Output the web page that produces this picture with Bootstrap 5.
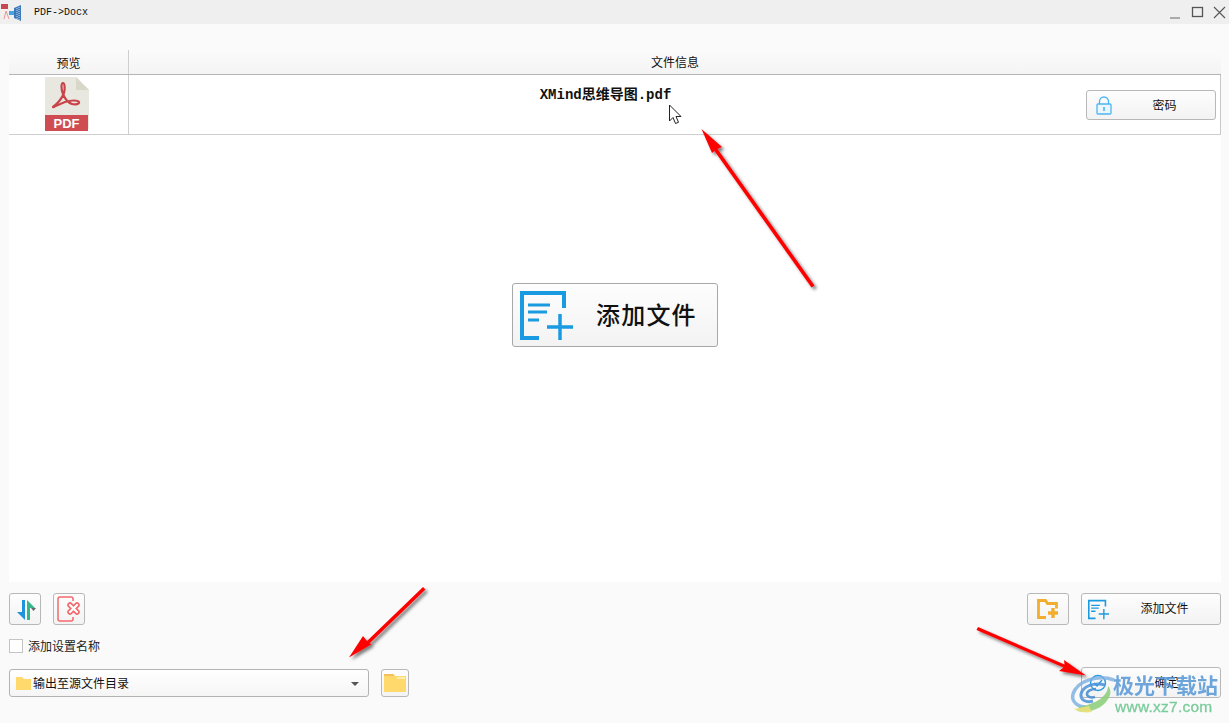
<!DOCTYPE html>
<html lang="zh"><head><meta charset="utf-8"><title>PDF->Docx</title>
<link href="https://cdn.jsdelivr.net/npm/bootstrap@5.3.0/dist/css/bootstrap.min.css" rel="stylesheet">
<style>
html,body{height:723px;overflow:hidden}
body{background:#fafafa;font-family:"Liberation Sans","Noto Sans CJK SC",sans-serif;font-size:12px;color:#111;position:relative}
.shell{height:723px}
.titlebar{height:24px;background:#efefef;padding-left:1px}
.apptitle{font-family:"Liberation Mono","Noto Sans CJK SC",monospace;font-size:10px;margin-left:13px}
.winbtns{gap:9px;padding-right:3px}
.worktop{margin:26px 8px 0 9px;height:532px;background:#fff}
.headrow{height:25px;background:linear-gradient(#fbfbfb,#f4f4f4);border-bottom:1px solid #b5b5b5;padding-top:2px}
.cellpreview{width:120px;border-right:1px solid #cfcfcf;text-align:center}
.headrow .cellpreview{margin-top:-2px}
.previewbox{padding-right:3px}
.filerow{height:60px;border-bottom:1px solid #cfcfcf;border-right:1px solid #c8c8c8}
.filename{font-family:"Liberation Mono","Noto Sans CJK SC",monospace;font-weight:700;font-size:14px;line-height:18px;padding:11px 4px 0 0}
.uibtn{background:linear-gradient(#fdfdfd,#f3f3f3);border:1px solid #b8b8b8;border-radius:3px;font-size:12px;color:#111;padding:0;display:flex;align-items:center}
.pwbtn{width:130px;height:30px;margin:15px 4px 0 0;padding-left:9px}
.pwbtn span{flex:1;text-align:center;padding:2px 0 0 2px}
.addbtn span{flex:1;text-align:center}
.okbtn span{flex:1;text-align:center;padding:1px 0 0 6px}
.bigwrap{padding-top:148px}
.bigbtn{width:206px;height:64px;font-size:24px;font-weight:500;padding-left:7px;font-family:"Noto Sans CJK SC",serif;letter-spacing:1.2px;border-color:#a8a8a8;color:#111}
.bigbtn span{margin-left:23px;margin-top:-2px}
.foot{padding:11px 8px 0 9px}
.sq32{width:32px;height:32px;justify-content:center}
.gapl{margin-left:12px}
.sq42{width:42px;height:32px;justify-content:center}
.addbtn{width:140px;height:32px;padding-left:6px}
.tick{width:14px;height:14px;background:#fff;border:1px solid #c4c4c4;display:inline-block;margin-right:5px}
.toolrow{height:32px}
.checkrow{height:14px;margin-top:14px;color:#222;line-height:16px}
.checklabel{padding-top:2px}
.pickrow{margin-top:14px;height:31px}
.picker{width:360px;height:28px;background:linear-gradient(#fff,#f5f5f5);border:1px solid #b3b3b3;border-radius:3px;padding:2px 9px 0 6px;gap:2px}
.caret{width:0;height:0;border-left:4px solid transparent;border-right:4px solid transparent;border-top:4px solid #555;margin-left:auto}
.fold{width:28px;height:28px;justify-content:center;margin-left:12px}
.okbtn{width:140px;height:31px;padding-left:7px}
.overlay{position:absolute;left:0;top:0;width:1229px;height:723px;pointer-events:none}
.mark1{position:absolute;left:1113px;top:670px;white-space:nowrap;font-family:"Noto Sans CJK SC",sans-serif;font-weight:700;font-size:21px;line-height:28px;color:#5a9ad8;opacity:.88}
.mark2{position:absolute;left:1115px;top:698px;white-space:nowrap;font-family:"Liberation Sans",sans-serif;font-size:15.5px;line-height:18px;color:#74c996;opacity:.95;letter-spacing:.25px;-webkit-text-stroke:.3px #74c996}
</style></head>
<body>
<div class="shell d-flex flex-column">
 <div class="titlebar d-flex align-items-center justify-content-between">
  <div class="d-flex align-items-center">
   <svg width="20" height="22" viewBox="0 0 20 22"><path d="M0 3h7v17H0z" fill="#f6eded"/><rect x="0" y="3" width="7" height="5" fill="#c9474f"/><path d="M3 18 5 10l3 8" fill="none" stroke="#e29a9a" stroke-width="1"/><path d="M8 10h5v4H8z" fill="#45a5de"/><path d="M13 7l7-3v16l-7-3z" fill="#3d78b8"/><path d="M16 7v11M18 6v13" stroke="#cfe0ef" stroke-width="1" stroke-dasharray="1 1"/></svg>
   <span class="apptitle">PDF-&gt;Docx</span>
  </div>
  <div class="d-flex align-items-center winbtns">
   <svg width="13" height="14" viewBox="0 0 13 14"><path d="M1 13h10" stroke="#666" stroke-width="1"/></svg>
   <svg width="13" height="12" viewBox="0 0 13 12"><rect x="1.500" y="1.500" width="10" height="9" fill="none" stroke="#555" stroke-width="1.300"/></svg>
   <svg width="13" height="13" viewBox="0 0 13 13"><path d="M1 1l11 11M12 1 1 12" stroke="#555" stroke-width="1.100"/></svg>
  </div>
 </div>
 <div class="worktop d-flex flex-column">
  <div class="headrow d-flex">
   <div class="cellpreview d-flex align-items-center justify-content-center pt-1">预览</div>
   <div class="flex-grow-1 d-flex align-items-center justify-content-center">文件信息</div>
  </div>
  <div class="filerow d-flex">
   <div class="cellpreview previewbox d-flex justify-content-center">
    <svg width="44" height="56" viewBox="0 0 44 56"><path d="M0 2h31l13 13v39H0z" fill="#e9e8e0"/><path d="M31 2l13 13H31z" fill="#d8d7c8"/><rect x="0" y="40" width="43" height="16" fill="#cf4d52"/><path d="M8 32c4-3 9-9 11-14 1-3 1-10-1-10s-2 6 0 11c2 5 6 9 9 10 3 1 8 0 7-2s-8-2-14 0-12 6-12 5z" fill="none" stroke="#c9444a" stroke-width="2.200"/><text x="21.500" y="53" text-anchor="middle" fill="#fff" font-size="13" font-weight="700" font-family="Liberation Sans">PDF</text></svg>
   </div>
   <div class="flex-grow-1 d-flex">
    <div class="filename flex-grow-1 text-center">XMind思维导图.pdf</div>
    <button class="uibtn pwbtn" type="button">
     <svg width="16" height="19" viewBox="0 0 16 19"><path d="M3.500 8V5.500a4.500 4.500 0 0 1 9 0V8" fill="none" stroke="#4db4f2" stroke-width="1.300"/><rect x="1" y="8" width="14" height="10" rx="1" fill="#eaf6fe" stroke="#4db4f2" stroke-width="1.300"/><rect x="7.200" y="11" width="1.600" height="4" fill="#4db4f2"/></svg>
     <span>密码</span></button>
   </div>
  </div>
  <div class="bigwrap d-flex justify-content-center">
   <button class="uibtn bigbtn" type="button">
    <svg width="53" height="49" viewBox="0 0 53 49"><path d="M19 47H2V2h42v15" fill="none" stroke="#1a9ae0" stroke-width="4"/><path d="M8 14h22M8 21h19M8 29h11" stroke="#1a9ae0" stroke-width="3"/><path d="M27 36h26M40 23v26" stroke="#1a9ae0" stroke-width="3.500"/></svg>
    <span>添加文件</span></button>
  </div>
 </div>
 <div class="foot">
  <div class="toolrow d-flex">
   <button class="uibtn sq32" type="button" aria-label="排序">
    <svg width="22" height="22" viewBox="0 0 22 22"><path d="M8 2h3v20L3 14h5z" fill="#1f94dc"/><path d="M13 2l8 8h-5v12h-3z" fill="#35b885"/><path d="M17 10h5l-2.500 3z" fill="#666"/></svg></button>
   <button class="uibtn sq32 gapl" type="button" aria-label="删除">
    <svg width="24" height="26" viewBox="0 0 24 26"><path d="M16 5V3a2 2 0 0 0-2-2H3a2 2 0 0 0-2 2v20a2 2 0 0 0 2 2h11a2 2 0 0 0 2-2v-2" fill="none" stroke="#f2686d" stroke-width="1.500"/><path d="M13 9l7 7M20 9l-7 7" stroke="#f2686d" stroke-width="5.500" stroke-linecap="round"/><path d="M13 9l7 7M20 9l-7 7" stroke="#fff" stroke-width="2.300" stroke-linecap="round"/></svg></button>
   <button class="uibtn sq42 ms-auto" type="button" aria-label="添加文件夹">
    <svg width="22" height="20" viewBox="0 0 22 20"><path d="M9 18.500H1.500V1.500h7l2 3h9v5" fill="none" stroke="#f3ad2e" stroke-width="2.800"/><path d="M11 14h10M16 9v10" stroke="#f3ad2e" stroke-width="3.400"/></svg></button>
   <button class="uibtn addbtn gapl" type="button">
    <svg width="21" height="21" viewBox="0 0 53 49"><path d="M19 47H2V2h42v15" fill="none" stroke="#1a9ae0" stroke-width="4"/><path d="M8 14h22M8 21h19M8 29h11" stroke="#1a9ae0" stroke-width="3.500"/><path d="M27 36h26M40 23v26" stroke="#1a9ae0" stroke-width="3.500"/></svg>
    <span>添加文件</span></button>
  </div>
  <div class="checkrow d-flex align-items-center"><i class="tick"></i><span class="checklabel">添加设置名称</span></div>
  <div class="pickrow d-flex align-items-center">
   <div class="picker d-flex align-items-center">
    <svg width="15" height="13" viewBox="0 0 15 13"><path d="M0 0h6l2 2h7v11H0z" fill="#ffd96b"/></svg>
    <span>输出至源文件目录</span><i class="caret"></i>
   </div>
   <button class="uibtn fold" type="button" aria-label="打开目录">
    <svg width="22" height="19" viewBox="0 0 22 19"><path d="M0 1h9l2 2h11v16H0z" fill="#ffd96b"/><path d="M0 1h9l2 2H0z" fill="#f5c05a"/><rect x="13" y="4" width="8" height="2" fill="#ffeeb0"/></svg></button>
   <button class="uibtn okbtn ms-auto" type="button">
    <svg width="18" height="18" viewBox="0 0 18 18"><circle cx="9" cy="9" r="7.500" fill="none" stroke="#2c9be0" stroke-width="1.400"/><path d="M5 9l3 3 5-6" fill="none" stroke="#2c9be0" stroke-width="1.400"/></svg>
    <span>确定</span></button>
  </div>
 </div>
</div>
<svg class="overlay" viewBox="0 0 1229 723">
 <defs><filter id="sh" x="-20%" y="-20%" width="150%" height="150%"><feDropShadow dx="2.500" dy="2.500" stdDeviation="1.800" flood-color="#000" flood-opacity=".5"/></filter></defs>
 <path d="M669.500 105v16l3.500-3.500 2.500 6 3-1.200-2.500-5.800h5z" fill="#fff" stroke="#222" stroke-width="1"/>
 <g fill="#f00" filter="url(#sh)">
  <path d="M701.500 129 722 147 717.500 149 814.500 285.500 811.500 287.500 714.500 151 712 153z"/>
  <path d="M349 657.500 363 636 367 641 423 587 425.500 589.500 369.500 643.500 372 644z"/>
  <path d="M1086 675.500 1064 660 1064.500 664.500 978 627 976.500 630 1063.500 667.500 1059 671z"/>
 </g>
 <g fill="none">
  <path d="M1114 680c-16-6-37 1-41 14-2 8 5 13 13 13" stroke="#7aaee0" stroke-width="3.500" opacity=".8"/>
  <path d="M1105 685c-11-3-22 1-24 9-1 6 5 9 12 7" stroke="#4a90d9" stroke-width="3" opacity=".85"/>
  <path d="M1096 689c-5 0-9 2-9 5s4 4 8 3" stroke="#4a8fd0" stroke-width="2.500" opacity=".9"/>
  <path d="M1077 711c14 3 29-4 33-16 1-4 0-7-2-9 0 10-12 18-29 21z" fill="#8fcf7e" stroke="none" opacity=".9"/>
  <path d="M1074 709c5 3 11 4 18 3l-3-6z" fill="#e9e07a" stroke="none" opacity=".9"/>
 </g>
</svg>
<div class="mark1">极光下载站</div>
<div class="mark2">www.xz7.com</div>
</body></html>
